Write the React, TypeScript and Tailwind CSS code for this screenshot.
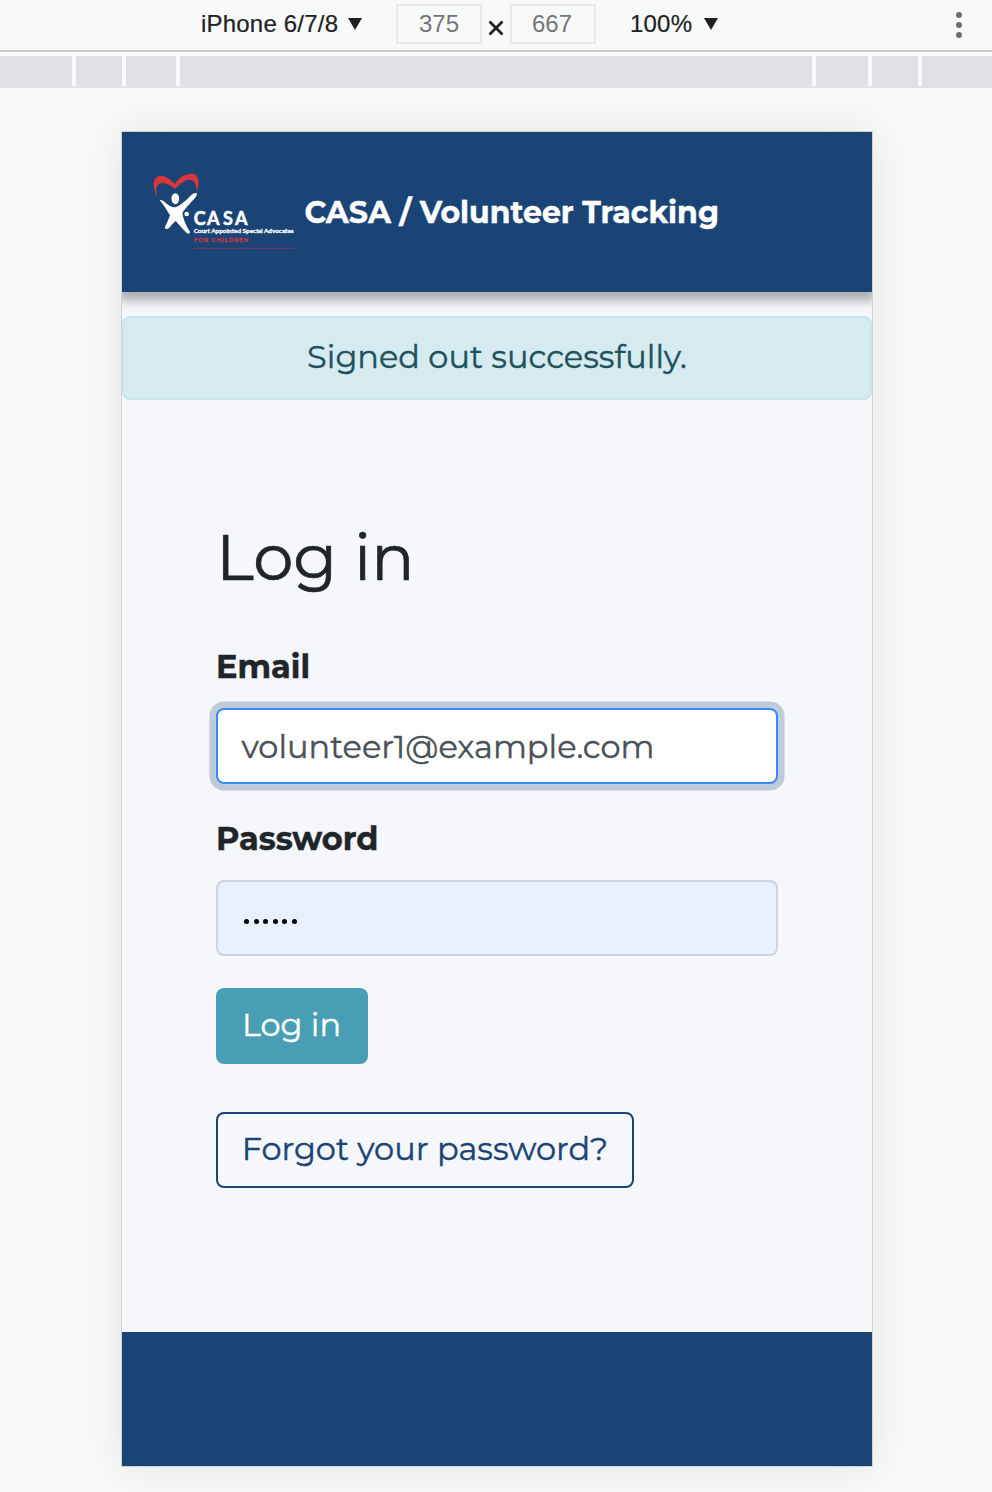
function CasaLogo() {
  return (
    <svg className="block h-[78px] w-[148px] shrink-0" viewBox="36 36 444 234" role="img" aria-label="CASA">
      <path
        d="M53 115C39 86 38 62 48 53C63 41 86 50 104 72C119 50 142 37 161 42C176 47 180 66 171 96C169 73 163 62 151 59C136 58 118 72 105 88C87 70 66 63 55 74C47 82 47 94 53 115Z"
        fill="#d9363c"
      />
      <g fill="#fff">
        <ellipse cx="106" cy="116" rx="11.5" ry="16.500" />
        <path d="M59 120Q66 118 75 127Q91 143 106 142Q124 137 153 106Q163 97 171 100Q173 106 165 114Q141 139 127 158Q130 184 150 216Q149 223 141 220Q128 207 107 183Q98 190 87 204Q79 211 74 203Q82 188 90 166Q76 141 59 120Z" />
        <circle cx="140" cy="162" r="7" />
        <text x="161 201 249 285" y="195" fontSize="54" fontWeight="700" stroke="#fff" strokeWidth="1.500" fontFamily="Lato, sans-serif">CASA</text>
        <text x="161" y="220" fontSize="18" fontWeight="700" stroke="#fff" strokeWidth=".8" fontFamily="Lato, sans-serif" textLength="300" lengthAdjust="spacingAndGlyphs">Court Appointed Special Advocates</text>
      </g>
      <text x="162" y="247" fontSize="18" fontWeight="700" fill="#cf3542" stroke="#cf3542" strokeWidth="1" fontFamily="Lato, sans-serif" textLength="162">FOR CHILDREN</text>
      <path d="M162 265H461" stroke="#8d3557" strokeWidth="2.500" />
    </svg>
  );
}

function Caret() {
  return (
    <svg className="block h-3 w-[14px]" viewBox="0 0 14 12">
      <path d="M0 0H14L7 12Z" fill="#202124" />
    </svg>
  );
}

function Toolbar() {
  return (
    <div className="flex h-[52px] items-start border-b-2 border-[#caccd0] pt-1 pl-[201px] font-['Liberation_Sans',sans-serif] text-[24px] leading-10 text-[#202124]">
      <div className="flex w-[195px] items-center gap-[9px]">
        <span className="w-[138px] whitespace-nowrap tracking-[0.2px] [-webkit-text-stroke:0.2px]">iPhone 6/7/8</span>
        <Caret />
      </div>
      <div className="flex h-10 w-[86px] items-center justify-center border-2 border-[#e9ebeb] text-[#757575]">375</div>
      <svg className="mt-4 ml-[6px] block h-4 w-4" viewBox="0 0 16 16">
        <path d="M1.500 1.500L14.500 14.500M14.500 1.500L1.500 14.500" stroke="#202124" strokeWidth="2.800" />
      </svg>
      <div className="ml-[6px] flex h-10 w-[86px] items-center justify-center border-2 border-[#e9ebeb] pr-[2px] text-[#757575]">667</div>
      <div className="ml-[34px] flex items-center gap-3">
        <span className="w-[62px] tracking-[0.2px] [-webkit-text-stroke:0.2px]">100%</span>
        <Caret />
      </div>
      <div className="mt-2 mr-[30px] ml-auto flex flex-col gap-1">
        <i className="h-[6px] w-[6px] rounded-full bg-[#6e6e6e]" />
        <i className="h-[6px] w-[6px] rounded-full bg-[#6e6e6e]" />
        <i className="h-[6px] w-[6px] rounded-full bg-[#6e6e6e]" />
      </div>
    </div>
  );
}

function Ruler() {
  return (
    <div className="mt-1 flex h-8 gap-1 border-b-2 border-[#dfe0e4]">
      <div className="w-[72px] bg-[#dfe0e4]" />
      <div className="w-[46px] bg-[#dfe0e4]" />
      <div className="w-[50px] bg-[#dfe0e4]" />
      <div className="w-[632px] bg-[#dfe0e4]" />
      <div className="w-[52px] bg-[#dfe0e4]" />
      <div className="w-[46px] bg-[#dfe0e4]" />
      <div className="flex-1 bg-[#dfe0e4]" />
    </div>
  );
}

export default function App() {
  return (
    <div className="h-[1492px] w-[992px] overflow-hidden bg-[#f8faf9]">
      <Toolbar />
      <Ruler />
      <div className="mt-11 ml-[122px] flex h-[1334px] w-[750px] flex-col overflow-hidden bg-[#f5f7fb] font-['Montserrat','Inter',sans-serif] text-[32px] text-[#212529] shadow-[0_0_0_1px_#d0d2d3,0_0_44px_rgba(0,0,0,0.09)] [-webkit-text-stroke:0.4px]">
        <header className="flex h-40 shrink-0 bg-[#1a4476] pl-[30px] shadow-[0_6px_9px_3px_rgba(0,0,0,0.29)]">
          <div className="pt-10 [-webkit-text-stroke:0px]">
            <CasaLogo />
          </div>
          <h1 className="mt-[61px] ml-[4.500px] self-start text-[30px] leading-10 font-bold whitespace-nowrap text-white">CASA / Volunteer Tracking</h1>
        </header>
        <div className="mt-6 flex h-[84px] shrink-0 items-center justify-center rounded-lg border-2 border-[#c7e5eb] bg-[#d6ebf0] pb-[2px] text-[#20515c]">
          Signed out successfully.
        </div>
        <main className="flex flex-col items-start px-[94px] pt-[118px]">
          <h2 className="h-[78px] text-[64px] leading-[78px] [-webkit-text-stroke:0.7px]">Log in</h2>
          <label className="mt-[47px] h-12 leading-[48px] font-bold">Email</label>
          <div className="mt-[17px] flex h-[76px] w-[562px] items-center rounded-lg border-2 border-[#398af4] bg-white px-[23.500px] pt-[2px] text-[#495057] shadow-[0_0_0_6.500px_#bfcadb]">
            volunteer1@example.com
          </div>
          <label className="mt-[31px] h-12 leading-[48px] font-bold">Password</label>
          <div className="mt-[17px] flex h-[76px] w-[562px] items-center gap-[4.500px] rounded-lg border-2 border-[#ced4da] bg-[#e8effd] px-[26px] pt-[6px]">
            {[0, 1, 2, 3, 4, 5].map((dot) => (
              <i key={dot} className="h-[5px] w-[5px] rounded-full bg-black" />
            ))}
          </div>
          <button className="mt-8 flex h-[76px] w-[152px] items-center justify-center rounded-lg bg-[#489fb5] pr-px pb-[2px] text-white">Log in</button>
          <button className="mt-12 flex h-[76px] w-[418px] items-center justify-center rounded-lg border-2 border-[#1a4476] pb-[2px] whitespace-nowrap text-[#1a4476]">Forgot your password?</button>
        </main>
        <footer className="mt-auto h-[134px] shrink-0 bg-[#1a4476]" />
      </div>
    </div>
  );
}
